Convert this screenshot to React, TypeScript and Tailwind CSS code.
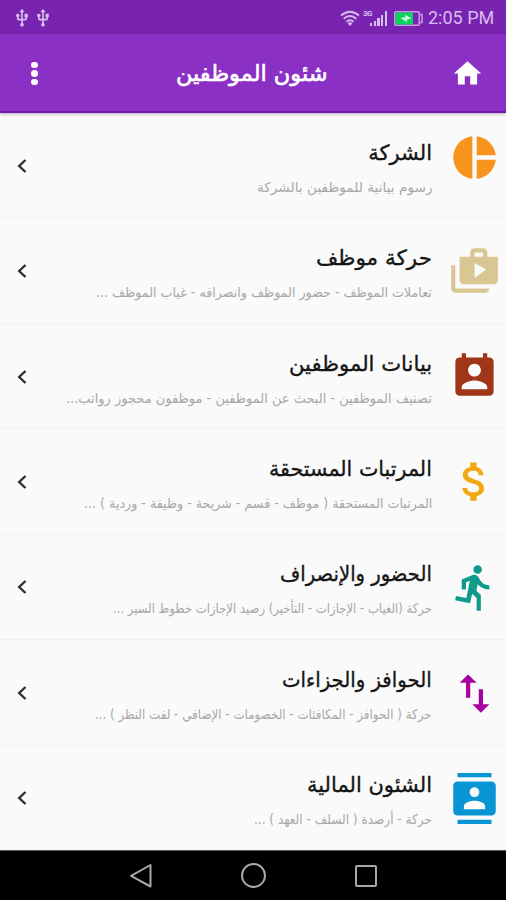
import React, { useLayoutEffect, useRef, useState } from "react";
import type { IconType } from "react-icons";
import {
  MdAttachMoney,
  MdContacts,
  MdDirectionsRun,
  MdHome,
  MdPermContactCalendar,
  MdPieChart,
  MdShopTwo,
  MdSwapVert,
  MdUsb,
} from "react-icons/md";

/** A single line of text that is condensed or widened to fill its box. */
function FitText({ text, className }: { text: string; className: string }) {
  const box = useRef<HTMLDivElement>(null);
  const line = useRef<HTMLSpanElement>(null);
  const [scale, setScale] = useState(1);
  useLayoutEffect(() => {
    if (box.current && line.current && line.current.offsetWidth > 0) {
      setScale(box.current.clientWidth / line.current.offsetWidth);
    }
  }, [text]);
  return (
    <div ref={box} dir="rtl" className={`flex shrink-0 whitespace-nowrap ${className}`}>
      <span ref={line} className="shrink-0 origin-right" style={{ transform: `scaleX(${scale})` }}>
        {text}
      </span>
    </div>
  );
}

interface Item {
  title: string;
  titleWidth: string;
  sub: string;
  subWidth: string;
  Icon: IconType;
  iconClass: string;
}

const items: Item[] = [
  {
    title: "الشركة",
    titleWidth: "w-[64px]",
    sub: "رسوم بيانية للموظفين بالشركة",
    subWidth: "w-[175px]",
    Icon: MdPieChart,
    iconClass: "text-[#f7941e] mb-[16px]",
  },
  {
    title: "حركة موظف",
    titleWidth: "w-[116px]",
    sub: "تعاملات الموظف - حضور الموظف وانصرافه - غياب الموظف ...",
    subWidth: "w-[336px]",
    Icon: MdShopTwo,
    iconClass: "text-[#d9c793] mt-[2px]",
  },
  {
    title: "بيانات الموظفين",
    titleWidth: "w-[143px]",
    sub: "تصنيف الموظفين - البحث عن الموظفين - موظفون محجوز رواتب...",
    subWidth: "w-[366px]",
    Icon: MdPermContactCalendar,
    iconClass: "text-[#a03618] mt-[1px]",
  },
  {
    title: "المرتبات المستحقة",
    titleWidth: "w-[163px]",
    sub: "المرتبات المستحقة ( موظف - قسم - شريحة - وظيفة - وردية ) ...",
    subWidth: "w-[348px]",
    Icon: MdAttachMoney,
    iconClass: "text-[#f2a90f] mt-[1px]",
  },
  {
    title: "الحضور والإنصراف",
    titleWidth: "w-[152px]",
    sub: "حركة (الغياب - الإجازات - التأخير) رصيد الإجازات خطوط السير ...",
    subWidth: "w-[319px]",
    Icon: MdDirectionsRun,
    iconClass: "text-[#109a8e] mt-[2px]",
  },
  {
    title: "الحوافز والجزاءات",
    titleWidth: "w-[150px]",
    sub: "حركة ( الحوافز - المكافئات - الخصومات - الإضافي - لفت النظر ) ...",
    subWidth: "w-[337px]",
    Icon: MdSwapVert,
    iconClass: "text-[#a9009f] mt-[2px]",
  },
  {
    title: "الشئون المالية",
    titleWidth: "w-[125px]",
    sub: "حركة - أرصدة ( السلف - العهد ) ...",
    subWidth: "w-[178px]",
    Icon: MdContacts,
    iconClass: "text-[#0795d3] mt-[2px]",
  },
];

function StatusBar() {
  return (
    <div className="flex h-[34px] shrink-0 items-center justify-between bg-[#7824b1] pr-[11px] pl-[12px] text-[#d9bcee]">
      <div className="flex gap-px pt-[2px]">
        <MdUsb size={20} />
        <MdUsb size={20} />
      </div>
      <div className="flex items-center pt-[2px]">
        <svg width="20" height="17" viewBox="0 0 20 17" fill="none" stroke="currentColor" strokeWidth="1.8">
          <path d="M1 5.5Q10 -2 19 5.5M3.7 8.7Q10 3.3 16.3 8.7M6.4 11.8Q10 8.8 13.6 11.8" />
          <path d="M7.6 13.2Q10 11.5 12.4 13.2L10 16Z" fill="currentColor" stroke="none" />
        </svg>
        <span className="ml-[3px] self-start font-['Roboto',sans-serif] text-[8px] leading-[9px] font-bold tracking-[-0.5px]">
          3G
        </span>
        <div className="-ml-[2px] flex h-[16px] items-end gap-[1.5px]">
          <span className="h-[3px] w-[2.2px] bg-current" />
          <span className="h-[5px] w-[2.2px] bg-current" />
          <span className="h-[8px] w-[2.2px] bg-current" />
          <span className="h-[11px] w-[2.2px] bg-current" />
          <span className="h-[15px] w-[2.2px] bg-current" />
        </div>
        <svg className="ml-[7px]" width="29" height="15" viewBox="0 0 29 15" fill="none">
          <rect x="0.8" y="0.8" width="24.4" height="13.4" rx="1" stroke="#c89ce8" strokeWidth="1.5" />
          <rect x="1.5" y="1.5" width="17.5" height="12" fill="#0bd35c" />
          <path d="M25.5 3.5H28V11.5H25.5" stroke="#c89ce8" strokeWidth="1.5" />
          <path d="M6.5 7L11.5 6V3.8L17.5 7.5L13 8.6V11Z" fill="#d5f5dd" />
        </svg>
        <span className="ml-[5px] w-[67px] font-['Roboto',sans-serif] text-[18px] leading-[18px] whitespace-nowrap">
          2:05 PM
        </span>
      </div>
    </div>
  );
}

function TitleBar() {
  return (
    <header className="flex h-[79px] shrink-0 items-center justify-between border-b-2 border-[#7419ae] bg-[#8a30c5] pr-[22px] pl-[31px] text-white shadow-[0_1px_3px_rgba(0,0,0,0.3)]">
      <div className="flex flex-col gap-[2px] pt-[2px]">
        <span className="size-[6.5px] rounded-full bg-white" />
        <span className="size-[6.5px] rounded-full bg-white" />
        <span className="size-[6.5px] rounded-full bg-white" />
      </div>
      <FitText
        text="شئون الموظفين"
        className="ml-[14px] w-[152px] pt-[3px] font-['DejaVu_Sans',sans-serif] text-[22px] leading-[30px] [-webkit-text-stroke:0.6px_white]"
      />
      <MdHome size={33} className="mt-[2px]" />
    </header>
  );
}

function Row({ item }: { item: Item }) {
  const { Icon } = item;
  return (
    <li className="flex min-h-0 flex-1 items-center border-b border-[#f0f0f0] pr-[6px] pl-[17px] last:border-b-0">
      <svg
        className="mt-[1px]"
        width="10"
        height="16"
        viewBox="0 0 10 16"
        fill="none"
        stroke="#303030"
        strokeWidth="2.4"
      >
        <path d="M8.5 2L2.2 8L8.5 14" />
      </svg>
      <div className="flex flex-1 flex-col items-end pt-[6px] font-['DejaVu_Sans',sans-serif]">
        <FitText
          text={item.title}
          className={`text-[21px] leading-[30px] text-[#151515] [-webkit-text-stroke:0.35px_#151515] ${item.titleWidth}`}
        />
        <FitText
          text={item.sub}
          className={`mt-[7px] text-[13.5px] leading-[24px] text-[#a8a8a8] ${item.subWidth}`}
        />
      </div>
      <Icon size={51} className={`ml-[17px] shrink-0 ${item.iconClass}`} />
    </li>
  );
}

function NavigationBar() {
  return (
    <nav className="flex h-[50px] shrink-0 items-center justify-between border-t border-[#555] bg-black pr-[129px] pl-[129px]">
      <svg width="23" height="26" viewBox="0 0 23 26" fill="none" stroke="#a8a8a8" strokeWidth="2">
        <path d="M21.5 2V23.5L2 12.8Z" strokeLinejoin="round" />
      </svg>
      <span className="size-[25px] rounded-full border-2 border-[#a8a8a8]" />
      <span className="size-[22px] rounded-[2px] border-2 border-[#a8a8a8]" />
    </nav>
  );
}

export default function App() {
  return (
    <div className="flex h-[900px] w-[506px] flex-col overflow-hidden bg-[#fafafa]">
      <StatusBar />
      <TitleBar />
      <ul className="flex min-h-0 flex-1 flex-col">
        {items.map((item) => (
          <Row key={item.title} item={item} />
        ))}
      </ul>
      <NavigationBar />
    </div>
  );
}
